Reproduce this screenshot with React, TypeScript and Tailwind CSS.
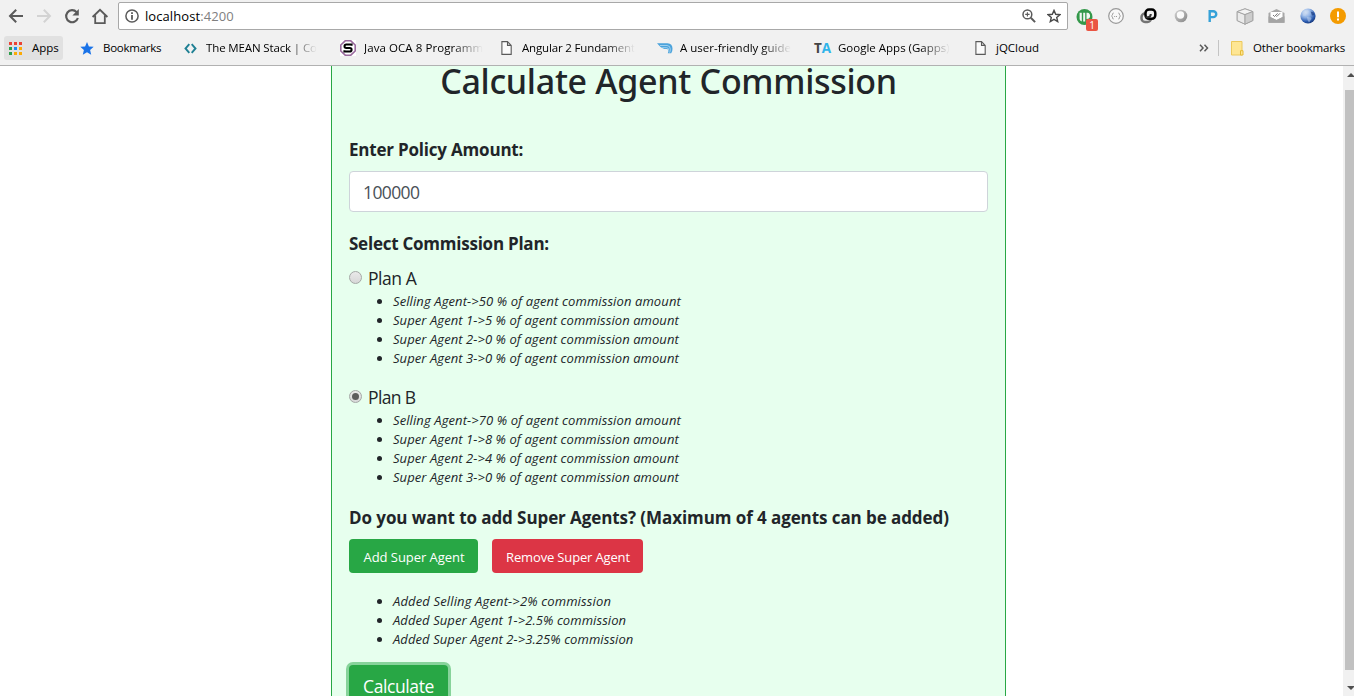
import type { ReactNode } from "react";

/* ---------- Browser chrome icons ---------- */

const BackIcon = () => (
  <svg width="16" height="16" viewBox="0 0 16 16" fill="none" stroke="#5a5a5a" strokeWidth="2">
    <path d="M15 8H2.5M8.2 1.8 2 8l6.2 6.2" />
  </svg>
);

const ForwardIcon = () => (
  <svg width="16" height="16" viewBox="0 0 16 16" fill="none" stroke="#d3d3d3" strokeWidth="2">
    <path d="M1 8h12.5M7.8 1.8 14 8l-6.2 6.2" />
  </svg>
);

const ReloadIcon = () => (
  <svg width="16" height="16" viewBox="0 0 16 16">
    <path d="M12.6 4.1A6 6 0 1 0 13.9 10" fill="none" stroke="#5a5a5a" strokeWidth="2.1" />
    <path d="M14.8 1v6.4H8.4z" fill="#5a5a5a" />
  </svg>
);

const HomeIcon = () => (
  <svg width="18" height="17" viewBox="0 0 18 17" fill="none" stroke="#5a5a5a" strokeWidth="1.8">
    <path d="M1.6 9 9 1.8 16.4 9M4.2 7.6v7.5h9.6V7.6" />
  </svg>
);

const InfoIcon = () => (
  <svg width="14" height="14" viewBox="0 0 14 14">
    <circle cx="7" cy="7" r="6.1" fill="none" stroke="#5a5a5a" strokeWidth="1.5" />
    <path d="M6.1 3.2h1.8v1.7H6.1zM6.1 6h1.8v4.7H6.1z" fill="#5a5a5a" />
  </svg>
);

const ZoomIcon = () => (
  <svg width="14" height="14" viewBox="0 0 14 14" fill="none" stroke="#5a5a5a">
    <circle cx="5.4" cy="5.4" r="4.4" strokeWidth="1.5" />
    <path d="m8.8 8.8 4.3 4.3" strokeWidth="2" />
    <path d="M5.4 3.2v4.4M3.2 5.4h4.4" strokeWidth="1.1" />
  </svg>
);

const StarOutlineIcon = () => (
  <svg width="14" height="14" viewBox="0 0 14 14" fill="none" stroke="#4a4a4a" strokeWidth="1.4">
    <path d="m7 1.4 1.7 3.9 4.2.4-3.2 2.8 1 4.1L7 10.4l-3.7 2.2 1-4.1L1.1 5.7l4.2-.4z" />
  </svg>
);

/* ---------- Extension icons ---------- */

const PanelExt = () => (
  <svg width="24" height="24" viewBox="0 0 24 24">
    <circle cx="9.5" cy="10" r="8" fill="#34984a" />
    <path d="M4.6 5.800h2.200v8.600q-2.200-.6-2.200-2.500zM8.200 5.800h2v8.600h-2zM11.500 5.800h1q2.600.3 2.600 3.200t-3.600 3z" fill="#f2f7f2" />
    <rect x="11" y="12" width="12" height="12" rx="2" fill="#ea5543" />
    <text x="17" y="21.8" textAnchor="middle" fontSize="10" fill="#fff" fontFamily="Open Sans, sans-serif">1</text>
  </svg>
);

const BracesExt = () => (
  <svg width="16" height="16" viewBox="0 0 16 16" fill="none" stroke="#9a9a9a">
    <circle cx="8" cy="8" r="7.3" fill="#f8f8f8" strokeWidth="1.2" />
    <path d="M5.600 5Q4.600 5 4.600 6.200T3.500 8q1.100.400 1.100 1.800T5.600 11M10.400 5q1 0 1 1.200T12.500 8q-1.100.400-1.100 1.800t-1 1.200" strokeWidth="1" />
    <path d="M6.200 8.500h3.600" strokeWidth="1" strokeDasharray="1 .8" />
  </svg>
);

const LinkExt = () => (
  <svg width="17" height="16" viewBox="0 0 17 16" fill="none" strokeWidth="2.500">
    <rect x="1.500" y="5.500" width="9.500" height="8.500" rx="3.500" stroke="#747474" />
    <rect x="5.500" y="1.500" width="9.800" height="9.300" rx="3.500" fill="#f1f1f1" stroke="#000" />
    <path d="M5.500 9.300h2.200q3 0 3.100-3.300" stroke="#333" strokeWidth="2" />
  </svg>
);

const RingExt = () => (
  <svg width="14" height="14" viewBox="0 0 14 14">
    <defs>
      <linearGradient id="ring" x1="0" y1="0" x2="1" y2="1">
        <stop offset="0" stopColor="#d4d4d4" />
        <stop offset="1" stopColor="#858585" />
      </linearGradient>
    </defs>
    <circle cx="7" cy="7" r="6.300" fill="url(#ring)" />
    <circle cx="6.500" cy="6" r="3.700" fill="#fafafa" />
  </svg>
);

const ParkExt = () => (
  <svg width="12" height="14" viewBox="0 0 12 14" fill="none" stroke="#35a1d8" strokeWidth="2.400">
    <path d="M2.700 13V2.200h3.600a2.900 2.900 0 0 1 0 5.900H2.700" />
  </svg>
);

const CubeExt = () => (
  <svg width="18" height="17" viewBox="0 0 18 17" stroke="#a0a0a0" strokeWidth=".9" strokeLinejoin="round">
    <path d="M9 .8 16.800 3.600v9L9 16.200 1.200 12.600v-9z" fill="#dadada" />
    <path d="M1.200 3.600 9 6.600v9.600l-7.800-3.600z" fill="#eaeaea" />
    <path d="M9 .8 16.800 3.600 9 6.600 1.200 3.600z" fill="#f3f3f3" />
    <path d="M9 6.600v9.600l7.800-3.600v-9z" fill="#cdcdcd" />
  </svg>
);

const MailExt = () => (
  <svg width="17" height="14" viewBox="0 0 17 14">
    <path d="M.5 4 8.500 0l8 4v9.800H.5z" fill="#a8a8a8" />
    <path d="M2.500 3h12v5l-6 3-6-3z" fill="#fff" />
    <path d="m5 6 1.500 1.500L9.600 4.300M8.300 7.200l.5.300 3.200-3.200" fill="none" stroke="#777" strokeWidth="1" />
    <path d="M.5 7.300 8.500 11l8-3.700v6.500H.5z" fill="#a4a4a4" />
  </svg>
);

const GlobeExt = () => (
  <svg width="16" height="16" viewBox="0 0 16 16">
    <defs>
      <radialGradient id="globe" cx=".35" cy=".25" r=".85">
        <stop offset="0" stopColor="#dbe7f7" />
        <stop offset=".4" stopColor="#8db0e4" />
        <stop offset=".72" stopColor="#2c5cb0" />
        <stop offset="1" stopColor="#0d2a66" />
      </radialGradient>
    </defs>
    <circle cx="8" cy="8" r="7.600" fill="url(#globe)" />
    <path d="M2.500 4.500Q5 1.500 8 2l1 2-2.500 1L6 7.500 3.500 8zM7 9l4 .5.500 1.500-2.500 3.500L7.500 12z" fill="#c3d6ee" opacity=".55" />
    <path d="m10.500 3.500 3 .8 1 2.700-2.500.500z" fill="#0f3177" opacity=".6" />
  </svg>
);

const WarnExt = () => (
  <svg width="16" height="16" viewBox="0 0 16 16">
    <circle cx="8" cy="8" r="8" fill="#f49b00" />
    <path d="M7 3.600h2v5.600H7zM7 10.400h2v2H7z" fill="#fff" />
  </svg>
);

/* ---------- Bookmark icons ---------- */

const AppsIcon = () => (
  <svg width="13" height="13" viewBox="0 0 13 13">
    <path d="M0 0h3v3H0zM5 0h3v3H5zM10 0h3v3h-3z" fill="#ea4335" />
    <path d="M0 5h3v3H0zM0 10h3v3H0z" fill="#2c9f4b" />
    <path d="M5 5h3v3H5z" fill="#1a8cf0" />
    <path d="M10 5h3v3h-3zM5 10h3v3H5zM10 10h3v3h-3z" fill="#fbaa06" />
  </svg>
);

const StarIcon = () => (
  <svg width="14" height="13" viewBox="0 0 14 13">
    <path d="m7 0 1.900 4.400 4.800.4-3.600 3.200 1.100 4.800L7 10.300l-4.200 2.500L3.900 8 .3 4.800l4.800-.4z" fill="#1a73e8" />
  </svg>
);

const CodeIcon = () => (
  <svg width="13" height="11" viewBox="0 0 13 11" fill="none" stroke="#1f8094" strokeWidth="1.900">
    <path d="M5.300 1.200 1.500 5.500l3.800 4.300M7.700 1.200l3.800 4.300-3.800 4.300" />
  </svg>
);

const OctagonIcon = () => (
  <svg width="16" height="16" viewBox="0 0 16 16">
    <path d="M0 0h16v16H0z" fill="#fff" />
    <path d="M5.200.8h5.600L15.200 5v6l-4.400 4.200H5.200L.8 11V5z" fill="#fff" stroke="#9a6a9e" strokeWidth="1.600" />
    <path d="M11.600 5.700V4.500H6.200q-1.700 0-1.700 1.700T6.200 7.900h3.600q1.800 0 1.800 1.800t-1.800 1.800H4.400v-1.300" fill="none" stroke="#000" strokeWidth="2" />
  </svg>
);

const FileIcon = () => (
  <svg width="11" height="14" viewBox="0 0 11 14" fill="#fbfbfb" stroke="#5a5a5a" strokeWidth="1.100">
    <path d="M.9.6h5.600L10.200 4.400v9H.9zM6.500.6v3.800h3.700" />
  </svg>
);

const SwooshIcon = () => (
  <svg width="16" height="11" viewBox="0 0 16 11">
    <path d="M0 .3h10.500q5 .2 5 5.500 0 3-1.300 4.500h-3.400q.9-1.500.5-3.200-.3-1-1.800-1H7.200Q3.500 5 0 .3z" fill="#4ba3dc" />
    <path d="M3 2.500h7q3.300.2 3.300 3.600 0 2-.7 3.600M5.200 4.700h4.600q2 .2 1.900 2.600" fill="none" stroke="#b7dcf3" strokeWidth=".8" />
  </svg>
);

const LettersIcon = () => (
  <span className="flex font-['Open_Sans',sans-serif] text-[13.500px] leading-4 font-bold">
    <span className="text-[#444]">T</span>
    <span className="text-[#2fb4ea]">A</span>
  </span>
);

const FolderIcon = () => (
  <svg width="13" height="15" viewBox="0 0 13 15" strokeWidth="1">
    <path d="M.5.500h10.500v13.500H.5z" fill="#fee694" stroke="#ecc95c" />
    <path d="M9.500 9.700h2.500V14H9.500z" fill="#fee694" stroke="#e6ba35" />
  </svg>
);

/* ---------- Building blocks ---------- */

function Bookmark({ item, slot, text, icon, label, fade }: { item: string; slot: string; text: string; icon: ReactNode; label: string; fade?: boolean }) {
  return (
    <div className={`flex shrink-0 items-center ${item}`}>
      <span className={`flex shrink-0 ${slot}`}>{icon}</span>
      <span className={`whitespace-nowrap ${text} ${fade ? "[mask-image:linear-gradient(to_right,black_74%,transparent)]" : ""}`}>
        {label}
      </span>
    </div>
  );
}

function AgentList({ rows, className = "" }: { rows: { text: string; track: string }[]; className?: string }) {
  return (
    <ul className={`pl-7 text-[13px] leading-[19px] italic ${className}`}>
      {rows.map((row) => (
        <li key={row.text} className="flex items-center">
          <span className="mr-[11px] size-[5px] rounded-full bg-[#212529]" />
          <span className={`whitespace-nowrap ${row.track}`}>{row.text}</span>
        </li>
      ))}
    </ul>
  );
}

function Radio({ checked, label, track }: { checked: boolean; label: string; track: string }) {
  return (
    <label className="flex h-[27px] items-center">
      <span className="mr-1.5 mb-[2px] flex size-[13px] items-center justify-center rounded-full border border-[#a5a8a6] bg-linear-to-b from-[#e9e9e9] to-[#d8d8d8]">
        {checked && <span className="size-[7px] rounded-full bg-[#5c5c5c]" />}
      </span>
      <span className={`text-[17.5px] leading-[27px] ${track}`}>{label}</span>
    </label>
  );
}

const planA = [
  { text: "Selling Agent->50 % of agent commission amount", track: "tracking-[0.1px]" },
  { text: "Super Agent 1->5 % of agent commission amount", track: "tracking-[0.07px]" },
  { text: "Super Agent 2->0 % of agent commission amount", track: "tracking-[0.07px]" },
  { text: "Super Agent 3->0 % of agent commission amount", track: "tracking-[0.07px]" },
];

const planB = [
  { text: "Selling Agent->70 % of agent commission amount", track: "tracking-[0.1px]" },
  { text: "Super Agent 1->8 % of agent commission amount", track: "tracking-[0.07px]" },
  { text: "Super Agent 2->4 % of agent commission amount", track: "tracking-[0.07px]" },
  { text: "Super Agent 3->0 % of agent commission amount", track: "tracking-[0.07px]" },
];

const added = [
  { text: "Added Selling Agent->2% commission", track: "tracking-[0.14px]" },
  { text: "Added Super Agent 1->2.5% commission", track: "tracking-[0.08px]" },
  { text: "Added Super Agent 2->3.25% commission", track: "tracking-[0.08px]" },
];

function Toolbar() {
  return (
    <div className="flex h-8 items-center pl-2">
      <span className="w-7"><BackIcon /></span>
      <span className="w-7"><ForwardIcon /></span>
      <span className="w-[27px]"><ReloadIcon /></span>
      <span className="w-[27px]"><HomeIcon /></span>
      <div className="flex h-7 w-[950px] shrink-0 items-center rounded-[2px] border border-[#a8a8a8] bg-white pr-[6px] pl-1.5">
        <InfoIcon />
        <span className="ml-1.5 pt-[1px] text-[13px] tracking-[0.08px] text-black">
          localhost<span className="text-[#808080]">:4200</span>
        </span>
        <span className="ml-auto flex items-center gap-[11px]">
          <ZoomIcon />
          <StarOutlineIcon />
        </span>
      </div>
      <div className="ml-[7px] flex items-center">
        <span className="mt-[5px] w-[33px] shrink-0"><PanelExt /></span>
        <span className="w-8 shrink-0"><BracesExt /></span>
        <span className="w-[34px] shrink-0"><LinkExt /></span>
        <span className="w-[33px] shrink-0"><RingExt /></span>
        <span className="w-[29px] shrink-0"><ParkExt /></span>
        <span className="w-[32px] shrink-0"><CubeExt /></span>
        <span className="w-[32px] shrink-0"><MailExt /></span>
        <span className="w-[30px] shrink-0"><GlobeExt /></span>
        <span className="shrink-0"><WarnExt /></span>
      </div>
    </div>
  );
}

function BookmarksBar() {
  return (
    <div className="flex h-[33px] items-center pb-[1px] pl-1 text-[11.5px] leading-6 text-black">
      <div className="mr-[17px] flex h-6 w-[59px] shrink-0 items-center rounded-[3px] bg-[#e1e1e1] pl-[5px]">
        <span className="w-[23px]"><AppsIcon /></span>
        <span>Apps</span>
      </div>
      <Bookmark item="w-[104px]" slot="w-[23px]" text="tracking-[-0.25px]" icon={<StarIcon />} label="Bookmarks" />
      <Bookmark item="w-[156px]" slot="w-[22px]" text="tracking-[-0.13px]" icon={<CodeIcon />} label="The MEAN Stack | Co" fade />
      <Bookmark item="w-[161px]" slot="w-6" text="tracking-[0.08px]" icon={<OctagonIcon />} label="Java OCA 8 Programm" fade />
      <Bookmark item="w-[156px]" slot="w-[21px]" text="tracking-[-0.16px]" icon={<FileIcon />} label="Angular 2 Fundament" fade />
      <Bookmark item="w-[157px]" slot="w-[23px]" text="" icon={<SwooshIcon />} label="A user-friendly guide" fade />
      <Bookmark item="w-[161px]" slot="w-6" text="" icon={<LettersIcon />} label="Google Apps (Gapps)" fade />
      <Bookmark item="w-20" slot="w-[21px]" text="" icon={<FileIcon />} label="jQCloud" />
      <div className="ml-auto flex items-center pr-[9px]">
        <svg width="10" height="8" viewBox="0 0 10 8" fill="none" stroke="#5a5a5a" strokeWidth="1.500">
          <path d="m1 .8 3 3.200-3 3.200M5.500.8l3 3.200-3 3.200" />
        </svg>
        <span className="ml-[9px] h-4 w-px bg-[#c4c4c4]" />
        <span className="mr-[9px] ml-3"><FolderIcon /></span>
        <span className="tracking-[-0.16px]">Other bookmarks</span>
      </div>
    </div>
  );
}

function Scrollbar() {
  return (
    <div className="flex w-[11px] flex-col items-end bg-[#f1f1f1]">
      <svg className="mt-[7px]" width="7" height="4" viewBox="0 0 7 4"><path d="M0 4 4 0l3 3v1z" fill="#505050" /></svg>
      <div className="mt-[13px] h-[580px] w-[9px] bg-[#c1c1c1]" />
      <svg className="mt-4" width="7" height="4" viewBox="0 0 7 4"><path d="M0 0h7v1L4 4z" fill="#505050" /></svg>
    </div>
  );
}

export default function App() {
  return (
    <div className="flex h-[696px] w-[1354px] flex-col overflow-hidden bg-white font-['Open_Sans','Noto_Sans',sans-serif]">
      <header className="h-[66px] shrink-0 border-b border-[#b1b1b1] bg-[#f1f1f1]">
        <Toolbar />
        <BookmarksBar />
      </header>
      <div className="flex h-[630px]">
        <div className="flex-1 pl-[331px]">
          <main className="h-[630px] w-[675px] overflow-hidden border-x border-[#28a745] bg-[#e7ffee] px-[17px] text-[#212529]">
            <h1 className="text-center font-['Noto_Sans'] text-[34px] leading-[30px] font-medium tracking-[-0.3px]">Calculate Agent Commission</h1>

            <div className="mt-10 text-[17px] leading-[27px] font-bold tracking-[-0.2px]">Enter Policy Amount:</div>
            <div className="mt-2 h-[41px] rounded-[4px] border border-[#ced4da] bg-white px-[13px] pt-[7px] text-[17.5px] leading-[27px] tracking-[-0.6px] text-[#495057]">
              100000
            </div>

            <div className="mt-[18px] text-[17px] leading-[27px] font-bold tracking-[-0.24px]">Select Commission Plan:</div>
            <div className="mt-2">
              <Radio checked={false} label="Plan A" track="tracking-[-0.45px]" />
              <AgentList rows={planA} />
            </div>
            <div className="mt-4">
              <Radio checked label="Plan B" track="tracking-[-0.65px]" />
              <AgentList rows={planB} />
            </div>

            <div className="mt-[17px] text-[17px] leading-[27px] font-bold tracking-[-0.08px] whitespace-nowrap">
              Do you want to add Super Agents? (Maximum of 4 agents can be added)
            </div>
            <div className="mt-2 flex gap-3.5 text-[13px] text-white">
              <button className="h-[34px] w-[129px] rounded-[4px] bg-[#28a745] pt-[3px] pl-px tracking-[-0.05px] whitespace-nowrap">Add Super Agent</button>
              <button className="h-[34px] w-[151px] rounded-[4px] bg-[#dc3545] pt-[3px] pl-px tracking-[-0.15px] whitespace-nowrap">Remove Super Agent</button>
            </div>
            <AgentList rows={added} className="mt-[19px]" />
            <button className="mt-4 h-[43px] w-[99px] rounded-[4px] bg-[#28a745] text-[17.5px] leading-[27px] tracking-[-0.4px] text-white ring-3 ring-[#28a745]/50">
              Calculate
            </button>
          </main>
        </div>
        <Scrollbar />
      </div>
    </div>
  );
}
